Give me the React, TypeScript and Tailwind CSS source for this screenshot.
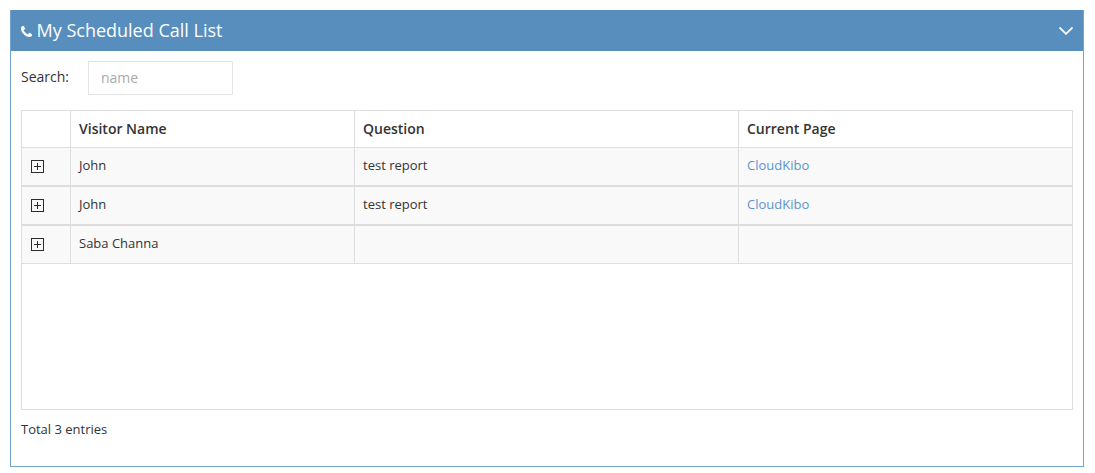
type Call = { visitor: string; question: string; page: string };

const calls: Call[] = [
  { visitor: "John", question: "test report", page: "CloudKibo" },
  { visitor: "John", question: "test report", page: "CloudKibo" },
  { visitor: "Saba Channa", question: "", page: "" },
];

function PhoneIcon() {
  return (
    <svg viewBox="0 128 1408 1408" className="mt-px mr-[4.5px] h-[11px] w-[11px] shrink-0 fill-white stroke-white stroke-[50]" aria-hidden="true">
      <path d="M1408 1240q0 27-10 70.5t-21 68.5q-21 50-122 106-94 51-186 51-27 0-53-3.5t-57.5-12.5-47-14.5-55.5-20.5-49-18q-98-35-175-83-127-79-264-216t-216-264q-48-77-83-175-3-9-18-49t-20.5-55.5-14.5-47-12.5-57.5-3.5-53q0-92 51-186 56-101 106-122 25-11 68.5-21t70.5-10q14 0 21 3 18 6 53 76 11 19 30 54t35 63.5 31 53.5q3 4 17.5 25t21.5 35.5 7 28.5q0 20-28.5 50t-62 55-62 53-28.5 46q0 9 5 22.5t8.5 20.5 14 24 11.5 19q76 137 174 235t235 174q2 1 19 11.5t24 14 20.5 8.5 22.5 5q18 0 46-28.5t53-62 55-62 50-28.5q14 0 28.5 7t35.5 21.5 25 17.5q25 15 53.5 31t63.5 35 54 30q70 35 76 53 3 7 3 21z" />
    </svg>
  );
}

function ExpandIcon() {
  return (
    <svg viewBox="0 0 13 13" className="h-[13px] w-[13px]" fill="none" stroke="#2b2b2b" shapeRendering="crispEdges" aria-hidden="true">
      <path d="M.5 .5h12v12h-12z M3 6.5h7 M6.5 3v7" />
    </svg>
  );
}

export default function App() {
  return (
    <div className="h-[473px] bg-white pt-[10px] pr-[11px] pl-[10px] font-['Open_Sans',sans-serif] text-[13px] text-[#333]">
      <section className="flex h-[457px] flex-col border border-t-0 border-[#72a4d2]">
        <header className="flex h-[41px] shrink-0 items-center bg-[#578ebe] pr-[10px] pl-[10px] text-white">
          <PhoneIcon />
          <h1 className="flex-1 pb-[2px] text-[18px] leading-[18px]">My Scheduled Call List</h1>
          <svg viewBox="0 0 14 8" className="h-[8px] w-[14px]" fill="none" stroke="white" strokeWidth="1.8" aria-hidden="true">
            <path d="M.5 .5 7 6.8 13.5 .5" />
          </svg>
        </header>
        <div className="flex flex-1 flex-col px-[10px] pt-[10px]">
          <label className="flex h-[34px] text-[14px]">
            <span className="w-[67px] pt-[6px] leading-5">Search:</span>
            <input
              placeholder="name"
              className="h-[34px] w-[145px] border border-[#e5e5e5] px-3 pb-[2px] text-[14px] outline-none placeholder:text-[#aaa]"
            />
          </label>
          <div className="mt-[15px] h-[300px] border border-[#ddd]">
            <table className="w-full table-fixed border-separate border-spacing-0 text-left">
              <colgroup>
                <col className="w-[49px]" />
                <col className="w-[284px]" />
                <col className="w-[384px]" />
                <col />
              </colgroup>
              <thead>
                <tr className="h-[37px] text-[14px] *:border-b *:border-[#ddd] *:pt-0 *:pr-0 *:pb-[2px] *:pl-2 *:font-semibold">
                  <th className="border-r" />
                  <th className="border-r">Visitor Name</th>
                  <th className="border-r">Question</th>
                  <th>Current Page</th>
                </tr>
              </thead>
              <tbody>
                {calls.map((call, i) => (
                  <tr
                    key={i}
                    className="h-[39px] bg-[#f9f9f9] *:border-b-2 *:border-[#ddd] *:p-0 *:pt-2 *:pl-2 *:align-top *:leading-[18px] last:h-[38px] last:*:border-b"
                  >
                    <td className="border-r">
                      <div className="pt-1 pl-px">
                        <ExpandIcon />
                      </div>
                    </td>
                    <td className="border-r">{call.visitor}</td>
                    <td className="border-r">{call.question}</td>
                    <td>
                      <a className="text-[#5b93cf]">{call.page}</a>
                    </td>
                  </tr>
                ))}
              </tbody>
            </table>
          </div>
          <p className="pt-[10px] leading-[18px]">Total 3 entries</p>
        </div>
      </section>
    </div>
  );
}
